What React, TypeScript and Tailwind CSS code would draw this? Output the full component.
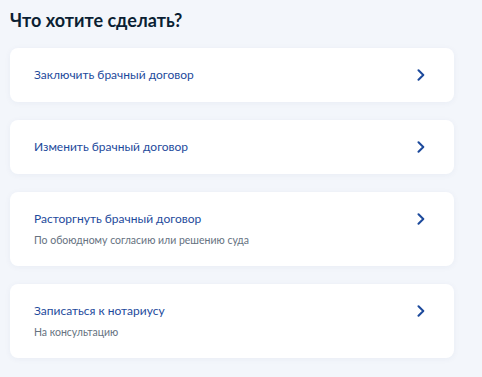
const options = [
  { title: 'Заключить брачный договор' },
  { title: 'Изменить брачный договор' },
  { title: 'Расторгнуть брачный договор', hint: 'По обоюдному согласию или решению суда' },
  { title: 'Записаться к нотариусу', hint: 'На консультацию' },
]

function Chevron() {
  return (
    <svg width="8" height="12" viewBox="0 0 8 12" fill="none" className="mt-[2px] shrink-0">
      <path d="M1.5 1.2L6.3 6L1.5 10.8" stroke="#1d4a9c" strokeWidth="2" strokeLinecap="round" strokeLinejoin="round" />
    </svg>
  )
}

export default function App() {
  return (
    <div className="min-h-[377px] w-[482px] bg-[#f3f6fb] pl-[10px] pr-[28px] pt-[8px] font-['Lato','Noto_Sans',sans-serif]">
      <h1 className="text-[18px] font-bold leading-[24px] text-[#0b1f33]">Что хотите сделать?</h1>
      <div className="mt-[16px] flex flex-col gap-[18px]">
        {options.map((o) => (
          <button
            key={o.title}
            type="button"
            className="flex w-full items-start justify-between rounded-[8px] bg-white pb-[19px] pl-[24px] pr-[29px] pt-[19px] text-left shadow-[0_1px_6px_rgba(30,60,120,0.05)]"
          >
            <div className="flex flex-col">
              <span className="text-[12px] leading-[16px] text-[#1d4a9c]">{o.title}</span>
              {o.hint && <span className="mt-[6px] text-[10.5px] leading-[14px] text-[#66727f]">{o.hint}</span>}
            </div>
            <Chevron />
          </button>
        ))}
      </div>
    </div>
  )
}
